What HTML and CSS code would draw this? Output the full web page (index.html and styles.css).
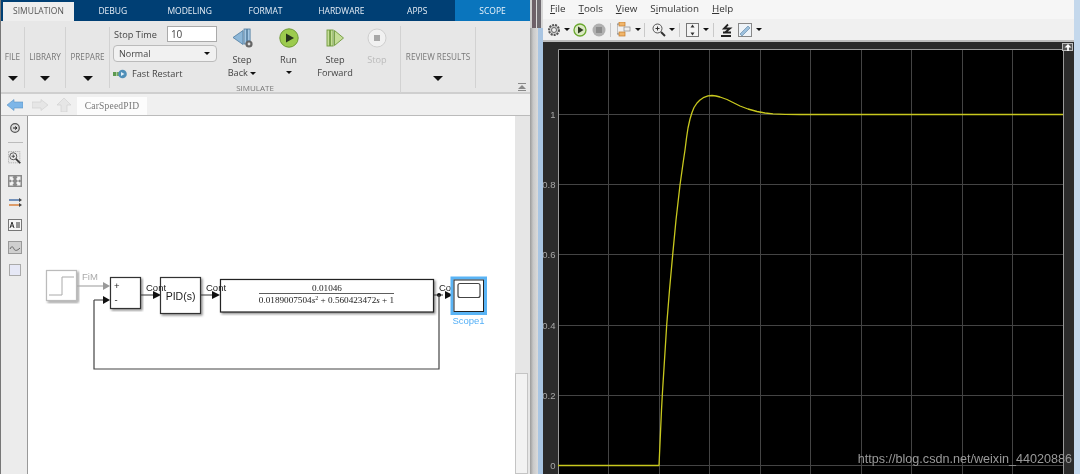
FILE: index.html
```html
<!DOCTYPE html>
<html lang="en">
<head>
<meta charset="utf-8">
<title>CarSpeedPID</title>
<link rel="stylesheet" href="styles.css">
</head>
<body>
<div class="desk">
  <section class="simulink">
    <nav class="tabs">
      <span class="tab active">SIMULATION</span>
      <span class="tab">DEBUG</span>
      <span class="tab">MODELING</span>
      <span class="tab">FORMAT</span>
      <span class="tab">HARDWARE</span>
      <span class="tab">APPS</span>
      <span class="tab scope">SCOPE</span>
    </nav>
    <div class="ribbon">
      <div class="group g-file"><span class="glabel">FILE</span><i class="caret"></i></div>
      <div class="group g-lib"><span class="glabel">LIBRARY</span><i class="caret"></i></div>
      <div class="group g-prep"><span class="glabel">PREPARE</span><i class="caret"></i></div>
      <div class="group g-sim">
        <div class="sim-main">
          <div class="stop-col">
            <div class="stop-row"><span>Stop Time</span><span class="stop-input">10</span></div>
            <div class="mode"><span>Normal</span><i class="mini"></i></div>
            <div class="fast">
              <svg width="14" height="10" viewBox="0 0 14 10"><rect x="0" y="3" width="3" height="4" fill="#5d9a50"/><rect x="3.500" y="3" width="3" height="4" fill="#74aa5f"/><circle cx="9.500" cy="5" r="4.300" fill="#4f8fb8"/><path d="M8 3l3.500 2L8 7z" fill="#dfeef8"/></svg>
              <span>Fast Restart</span>
            </div>
          </div>
          <div class="btn b-back">
            <svg width="24" height="24" viewBox="0 0 24 24"><path d="M3 11.500L13 4.500v14z" fill="#8db7d8" stroke="#4d7ba0" stroke-width=".8"/><rect x="14" y="3" width="2.600" height="15" fill="#a5c8e4" stroke="#4d7ba0" stroke-width=".8"/><rect x="17.500" y="3" width="2.600" height="12" fill="#a5c8e4" stroke="#4d7ba0" stroke-width=".8"/><circle cx="19" cy="18" r="3.600" fill="#666"/><circle cx="19" cy="18" r="1.400" fill="#ddd"/></svg>
            <span>Step</span><span>Back <i class="mini"></i></span>
          </div>
          <div class="btn b-run">
            <svg width="20" height="20" viewBox="0 0 20 20"><circle cx="10" cy="10" r="9.200" fill="#9ccb4e" stroke="#6e9a34"/><path d="M7 5.500l8 4.500-8 4.500z" fill="#26331c"/></svg>
            <span>Run</span><i class="mini"></i>
          </div>
          <div class="btn b-fwd">
            <svg width="20" height="20" viewBox="0 0 20 20"><rect x="2" y="2" width="2.600" height="16" fill="#c5dd98" stroke="#6f9a3c" stroke-width=".9"/><rect x="5.500" y="2" width="2.600" height="16" fill="#c5dd98" stroke="#6f9a3c" stroke-width=".9"/><path d="M9.500 2.500L18.500 10 9.500 17.500z" fill="#c5dd98" stroke="#6f9a3c" stroke-width=".9"/></svg>
            <span>Step</span><span>Forward</span>
          </div>
          <div class="btn b-stop">
            <svg width="20" height="20" viewBox="0 0 20 20"><circle cx="10" cy="10" r="9" fill="#f1f1f1" stroke="#cfcfcf"/><rect x="7" y="7" width="6" height="6" fill="#a8a8a8"/></svg>
            <span>Stop</span>
          </div>
        </div>
        <div class="sim-label">SIMULATE</div>
      </div>
      <div class="group g-review"><span class="glabel">REVIEW RESULTS</span><i class="caret"></i></div>
      <div class="ribbon-end">
        <svg width="8" height="8" viewBox="0 0 8 8"><rect width="8" height="1" fill="#888"/><path d="M4 2l4 4H0z" fill="#888"/><rect y="7" width="8" height="1" fill="#888"/></svg>
      </div>
    </div>
    <div class="crumbs">
      <svg width="16" height="12" viewBox="0 0 16 12"><path d="M0 6l7-5.500V3h9v6H7v2.500z" fill="#7db6e8" stroke="#5b93c4" stroke-width=".6"/></svg>
      <svg width="16" height="12" viewBox="0 0 16 12"><path d="M16 6L9 .5V3H0v6h9v2.500z" fill="#e6e6e6" stroke="#cfcfcf" stroke-width=".6"/></svg>
      <svg width="14" height="14" viewBox="0 0 14 14"><path d="M7 0l7 7h-4v7H4V7H0z" fill="#e6e6e6" stroke="#cfcfcf" stroke-width=".6"/></svg>
      <span class="crumb">CarSpeedPID</span>
    </div>
    <div class="workspace">
      <aside class="palette">
        <svg class="p1" width="14" height="14" viewBox="0 0 14 14"><circle cx="7" cy="7" r="4.300" fill="#ddd" stroke="#555" stroke-width="1.200"/><path d="M5 7h4M7 5.500L9 7 7 8.500" stroke="#222" fill="none"/></svg>
        <i class="rule"></i>
        <svg class="p2" width="14" height="14" viewBox="0 0 16 16"><rect x=".5" y=".5" width="13" height="13" fill="#e8e8e8" stroke="#aaa" stroke-dasharray="1.500 1"/><circle cx="6" cy="6" r="4" fill="#eee" stroke="#444"/><path d="M4 6h4M6 4v4" stroke="#444"/><path d="M9 9l5 5" stroke="#333" stroke-width="2"/></svg>
        <svg class="p3" width="14" height="12" viewBox="0 0 14 12"><rect width="14" height="12" fill="#8a8a8a"/><path d="M1.500 1.500h4l-1 1 1.500 1.500-2 2L2.500 4.500l-1 1zM12.500 1.500h-4l1 1L8 4l2 2 1.500-1.500 1 1zM1.500 10.500h4l-1-1L6 8 4 6 2.500 7.500l-1-1zM12.500 10.500h-4l1-1L8 8l2-2 1.500 1.500 1-1z" fill="#f4f4f4"/></svg>
        <svg class="p4" width="13" height="9" viewBox="0 0 13 9"><path d="M0 2h10" stroke="#4a72a8" stroke-width="1.500"/><path d="M0 7h10" stroke="#d9823f" stroke-width="1.500"/><path d="M10 0l3 2-3 2zM10 5l3 2-3 2z" fill="#444"/></svg>
        <svg class="p5" width="14" height="12" viewBox="0 0 14 12"><rect x=".5" y=".5" width="13" height="11" fill="#f5f5f5" stroke="#777"/><path d="M2 9l2-6 2 6M3 7h2M8 4h4M8 6h4M8 8h4" stroke="#333" fill="none"/></svg>
        <svg class="p6" width="14" height="13" viewBox="0 0 14 13"><rect x=".5" y=".5" width="13" height="12" fill="#cfcfcf" stroke="#999"/><path d="M2 8c2-4 3-2 4 0s3 2 6-1" stroke="#666" fill="none"/></svg>
        <i class="p7"></i>
      </aside>
      <div class="canvas">
        <svg class="diagram" width="487" height="358" viewBox="28 116 487 358">
          <defs>
            <filter id="sh" x="-10%" y="-10%" width="120%" height="120%"><feDropShadow dx="1.500" dy="1.500" stdDeviation="1" flood-color="#000" flood-opacity=".45"/></filter>
          </defs>
          <rect x="46.500" y="270.500" width="30" height="30" fill="#fff" stroke="#bbb" stroke-width="1.200" filter="url(#sh)"/>
          <path d="M49 295h13v-18h12" fill="none" stroke="#aaa"/>
          <path d="M77 286h28" stroke="#aaa" stroke-width="1.200"/>
          <path d="M103 282l7 4-7 4z" fill="#999"/>

          <rect x="110.500" y="277.500" width="30" height="31" fill="#fff" stroke="#333" stroke-width="1.200" filter="url(#sh)"/>
          <path d="M94 300h10" stroke="#333"/>
          <path d="M103 296l7 4-7 4z" fill="#111"/>
          <path d="M141 295h13" stroke="#333"/>
          <path d="M153 291l8 4-8 4z" fill="#111"/>

          <rect x="160.500" y="277.500" width="40" height="36" fill="#fff" stroke="#333" stroke-width="1.200" filter="url(#sh)"/>
          <path d="M201 295h12" stroke="#333"/>
          <path d="M212 291l8 4-8 4z" fill="#111"/>

          <rect x="220.500" y="279.500" width="213" height="32.500" fill="#fff" stroke="#222" stroke-width="1.200" filter="url(#sh)"/>
          <path d="M259 293.500h135" stroke="#333" stroke-width=".8"/>

          <path d="M434 295h9" stroke="#333"/>
          <circle cx="439" cy="295" r="2" fill="#111"/>
          <path d="M445 291l8 4-8 4z" fill="#111"/>
          <path d="M439 295v74H94v-69" fill="none" stroke="#444" stroke-width="1.200"/>

          <text x="82" y="280" class="lbl grey">FiM</text>
          <text x="114" y="289" class="lbl">+</text>
          <text x="114.500" y="303" class="lbl">-</text>
          <text x="146" y="291" class="lbl">Cont</text>
          <text x="180.500" y="300" class="pid">PID(s)</text>
          <text x="206" y="291" class="lbl">Cont</text>
          <text x="327" y="291" class="tf">0.01046</text>
          <text x="326.500" y="303" class="tf">0.0189007504<tspan class="it">s</tspan><tspan dy="-3" class="sup">2</tspan><tspan dy="3"> + 0.560423472</tspan><tspan class="it">s</tspan> + 1</text>
          <text x="439" y="291" class="lbl">Cont</text>

          <rect x="452" y="278" width="33.500" height="35.500" fill="#fff" stroke="#5ab4f5" stroke-width="3"/>
          <rect x="454" y="280" width="29.500" height="31.500" fill="#fff" stroke="#222" stroke-width="1"/>
          <rect x="458" y="283.500" width="22" height="14" rx="2" fill="#fff" stroke="#444" stroke-width="1.200"/>
          <text x="468.500" y="324" class="scope-name">Scope1</text>
        </svg>
      </div>
      <div class="vscroll"><i class="thumb"></i></div>
    </div>
  </section>
  <div class="split"></div>
  <section class="scopewin">
    <nav class="menu">
      <span><u>F</u>ile</span><span><u>T</u>ools</span><span><u>V</u>iew</span><span>S<u>i</u>mulation</span><span><u>H</u>elp</span>
    </nav>
    <div class="tools">
      <svg class="t" width="14" height="14" viewBox="0 0 14 14"><circle cx="7" cy="7" r="5" fill="#ccc" stroke="#555" stroke-width="2" stroke-dasharray="2 1"/><circle cx="7" cy="7" r="2.500" fill="#eee" stroke="#666"/></svg>
      <i class="mini ml3"></i>
      <svg class="t ml3" width="14" height="14" viewBox="0 0 14 14"><circle cx="7" cy="7" r="6" fill="#dbe9c4" stroke="#6aa82e" stroke-width="1.300"/><path d="M5 3.500L10.500 7 5 10.500z" fill="#2d3a20"/></svg>
      <svg class="t ml5" width="14" height="14" viewBox="0 0 14 14"><circle cx="7" cy="7" r="6.500" fill="#b0b0b0"/><rect x="4" y="4" width="6" height="6" fill="#8c8c8c"/></svg>
      <i class="sep ml4"></i>
      <svg class="t ml6" width="14" height="15" viewBox="0 0 14 15"><rect x="2" y="0" width="6" height="4" fill="#f0b56a" stroke="#c27a2a" stroke-width=".7"/><rect x="7" y="5" width="6" height="4" fill="#eee" stroke="#888" stroke-width=".7"/><rect x="2" y="10" width="6" height="4" fill="#f0b56a" stroke="#c27a2a" stroke-width=".7"/><path d="M0 2h2M0 2v10h2" stroke="#666" fill="none" stroke-width=".7"/></svg>
      <i class="mini ml4"></i>
      <i class="sep ml3"></i>
      <svg class="t ml7" width="14" height="14" viewBox="0 0 14 14"><circle cx="5.500" cy="5.500" r="4.500" fill="#eee" stroke="#555"/><path d="M3.500 5.500h4M5.500 3.500v4" stroke="#333"/><path d="M9 9l4 4" stroke="#333" stroke-width="2"/></svg>
      <i class="mini ml3"></i>
      <i class="sep ml4"></i>
      <svg class="t ml6" width="13" height="14" viewBox="0 0 13 14"><rect x=".5" y=".5" width="12" height="13" fill="#f4f4f4" stroke="#777"/><path d="M6.500 1.500l2 3h-4zM6.500 12.500l2-3h-4z" fill="#333"/></svg>
      <i class="mini ml4"></i>
      <i class="sep ml4"></i>
      <svg class="t ml6" width="14" height="14" viewBox="0 0 14 14"><path d="M1 13h10M3 9.500h8M8 1.500L4 5.500h6l-5 4" stroke="#222" stroke-width="1.800" fill="none"/></svg>
      <svg class="t ml4" width="14" height="14" viewBox="0 0 14 14"><rect x=".5" y=".5" width="13" height="13" fill="#eef3f8" stroke="#888"/><path d="M2 11l8-8 2 2-8 8z" fill="#9dc0dd" stroke="#6a8fae" stroke-width=".7"/></svg>
      <i class="mini ml4"></i>
    </div>
    <div class="scope-body">
      <span class="undock"><svg width="8" height="7" viewBox="0 0 8 8"><path d="M4 0l4 4H5v4H3V4H0z" fill="#fff"/></svg></span>
      <svg class="plot" width="531" height="432" viewBox="543 42 531 432">
        <rect x="558" y="49" width="505" height="425" fill="#000"/>
        <g stroke="#444" stroke-width="1">
          <path d="M608.500 49v425M659.500 49v425M709.500 49v425M760.500 49v425M810.500 49v425M861.500 49v425M911.500 49v425M962.500 49v425M1012.500 49v425"/>
          <path d="M558 114.500h505M558 184.500h505M558 254.500h505M558 325.500h505M558 395.500h505M558 465.500h505"/>
        </g>
        <path d="M558.500 474V49.500H1063.500V474" fill="none" stroke="#9a9a9a"/>
        <path d="M558 465.500H659L661.500 410 662.300 395 664.500 360 666.700 325 669.500 290 672.700 254.600 676 220 680 185 683.500 160 685 150 686.500 138 688 128 690 119 692 112.500 694 107.500 697 103 700 100 704 97.300 708 95.900 712 95.500 716 96 720 97 727 99.500 733 102.500 740 106 748 109 757 111.500 765 113 773 113.900 785 114.400 800 114.500H1063" fill="none" stroke="#c8c81e" stroke-width="1.300" stroke-linejoin="round"/>
        <g class="axis">
          <text x="555.500" y="118">1</text>
          <text x="555.500" y="188">0.8</text>
          <text x="555.500" y="258">0.6</text>
          <text x="555.500" y="329">0.4</text>
          <text x="555.500" y="399">0.2</text>
          <text x="555.500" y="469">0</text>
        </g>
        <text x="1072" y="463" class="mark">https://blog.csdn.net/weixin_44020886</text>
      </svg>
    </div>
  </section>
</div>
</body>
</html>
```
FILE: styles.css
```css
* { box-sizing: border-box; }
html, body { margin: 0; height: 100%; overflow: hidden; }
body { background: #d8d8d8; font-family: "Open Sans", "Liberation Sans", sans-serif; color: #444; }
.desk { display: flex; width: 1080px; height: 474px; filter: blur(.35px); }

.simulink { width: 530px; display: flex; flex-direction: column; background: #e8e8e8; border-left: 1px solid #777; }
.tabs { display: flex; height: 21px; background: #003f74; flex: none; padding-left: 2px; }
.tab { width: 76px; font-size: 8.500px; color: #e6eef6; text-align: center; line-height: 21px; }
.tab:nth-child(1) { width: 71px; }
.tab:nth-child(2) { width: 78px; }
.tab.active { margin-top: 2px; line-height: 17px; background: #eeeeee; color: #555; }
.tab.scope { margin-left: auto; width: 75px; background: #0a75bd; color: #eaf4fb; }

.ribbon { display: flex; height: 73px; flex: none; background: #e7e7e7; border-bottom: 2px solid #cfcfcf; padding-top: 6px; }
.group { height: 61px; border-right: 1px solid #d2d2d2; display: flex; flex-direction: column; align-items: center; flex: none; }
.glabel { font-size: 8.200px; color: #777; margin-top: 24px; white-space: nowrap; }
.caret { width: 0; height: 0; margin-top: 14px; border: 5px solid transparent; border-top: 5px solid #111; border-bottom: 0; }
.g-file { width: 24px; }
.g-lib { width: 41px; }
.g-prep { width: 44px; }
.g-sim { width: 291px; height: 67px; align-items: stretch; margin-top: -1px; }
.g-review { width: 75px; }
.ribbon-end { flex: 1; display: flex; align-items: flex-end; justify-content: flex-end; padding: 0 4px 1px 0; }
.sim-main { display: flex; height: 60px; }
.sim-label { font-size: 8px; color: #777; text-align: center; line-height: 10px; }
.stop-col { width: 111px; padding: 0 0 0 3px; flex: none; }
.stop-row { display: flex; align-items: center; font-size: 9.200px; color: #444; gap: 10px; padding-left: 1px; }
.stop-input { width: 50px; height: 16px; background: #fff; border: 1px solid #aaa; padding-left: 3px; line-height: 14px; font-size: 10px; }
.mode { width: 104px; height: 17px; margin-top: 3px; border: 1px solid #bbb; border-radius: 4px; background: #f1f1f1; display: flex; justify-content: space-between; align-items: center; padding: 0 6px 0 5px; font-size: 9px; }
.mini { display: inline-block; width: 0; height: 0; border: 3px solid transparent; border-top: 3px solid #111; border-bottom: 0; vertical-align: middle; flex: none; }
.fast { display: flex; align-items: center; gap: 5px; margin-top: 5px; font-size: 9.200px; }
.btn { display: flex; flex-direction: column; align-items: center; font-size: 9.200px; line-height: 12.500px; flex: none; }
.btn svg { margin-bottom: 6px; margin-top: 2px; }
.btn span { white-space: nowrap; }
.b-back { width: 42px; }
.b-back svg { margin: 0 0 4px; }
.b-run { width: 45px; margin-left: 3px; }
.b-fwd { width: 48px; }
.b-stop { width: 30px; margin-left: 3px; color: #bbb; }
.b-run .mini { margin-top: 4px; }

.crumbs { height: 22px; flex: none; background: #f0f0f0; display: flex; align-items: center; gap: 9px; padding-left: 6px; border-bottom: 1px solid #bbb; }
.crumbs svg { flex: none; }
.crumb { margin: 3px 0 0 -3px; align-self: stretch; width: 70px; background: #fcfcfc; font-family: "Liberation Serif", serif; font-size: 9.500px; letter-spacing: .2px; color: #777; text-align: center; line-height: 18px; }

.workspace { flex: 1; display: flex; min-height: 0; }
.palette { width: 27px; flex: none; background: #ececec; border-right: 1px solid #999; display: flex; flex-direction: column; align-items: center; padding: 5px 0 0 2px; }
.palette svg { flex: none; }
.palette .rule { width: 15px; height: 1px; background: #bbb; margin: 7px 0 8px; flex: none; }
.p3 { margin-top: 10px; }
.p4 { margin-top: 11px; }
.p5 { margin-top: 12px; }
.p6 { margin-top: 10px; }
.p7 { display: block; width: 12px; height: 12px; margin-top: 10px; background: #e6e8f6; border: 1px solid #aaa; }
.canvas { flex: none; width: 487px; background: #fff; }
.diagram { display: block; }
.vscroll { flex: 1; background: #e6e6e6; position: relative; }
.thumb { position: absolute; left: 0; right: 2px; top: 257px; bottom: 0; background: #f2f2f2; border: 1px solid #c4c4c4; }
.lbl { font-family: "Liberation Sans", sans-serif; font-size: 9.500px; fill: #222; }
.lbl.grey { fill: #aaa; }
.pid { font-family: "Liberation Sans", sans-serif; font-size: 10.500px; fill: #222; text-anchor: middle; }
.tf { font-family: "Liberation Serif", serif; font-size: 9.200px; fill: #222; text-anchor: middle; }
.it { font-style: italic; }
.sup { font-size: 6px; }
.scope-name { font-family: "Liberation Sans", sans-serif; font-size: 9.500px; fill: #55b0f7; text-anchor: middle; }

.split { width: 13px; flex: none; background:
  linear-gradient(90deg, #cfcfcf 0 2px, #6e6068 2px 6px, #dadada 6px 7px, #6f6a70 7px 11px, #d6d6d6 11px 13px) 0 0 / 100% 28px no-repeat,
  linear-gradient(90deg, #9a9a9a 0, #c9c9c9 25%, #dadada 60%, #a9c5e2 62%, #a9c5e2 100%); }
.scopewin { width: 537px; flex: none; display: flex; flex-direction: column; background: #f0f0f0; border-right: 6px solid #c4d8ec; }
.menu { height: 19px; flex: none; display: flex; background: #f6f6f6; font-size: 9.800px; color: #333; line-height: 18px; padding-left: 7px; gap: 13px; }
.tools { height: 23px; flex: none; background: #f0f0f0; display: flex; align-items: center; padding-left: 4px; border-bottom: 2px solid #bdbdbd; }
.t { flex: none; }
.ml3 { margin-left: 3px; }
.ml4 { margin-left: 4px; }
.ml5 { margin-left: 5px; }
.ml6 { margin-left: 6px; }
.ml7 { margin-left: 7px; }
.sep { width: 1px; height: 14px; background: #c9c9c9; flex: none; }
.scope-body { flex: 1; position: relative; background: #2b2b2b; min-height: 0; }
.plot { display: block; }
.undock { position: absolute; right: 1px; top: 1px; width: 11px; height: 8px; background: #555; border: 1px solid #bbb; display: flex; align-items: center; justify-content: center; }
.axis text { font-family: "Liberation Sans", sans-serif; font-size: 9.500px; fill: #a8a8a8; text-anchor: end; }
.mark { font-family: "Liberation Sans", sans-serif; font-size: 12.600px; fill: #9a9a9a; text-anchor: end; }
```
